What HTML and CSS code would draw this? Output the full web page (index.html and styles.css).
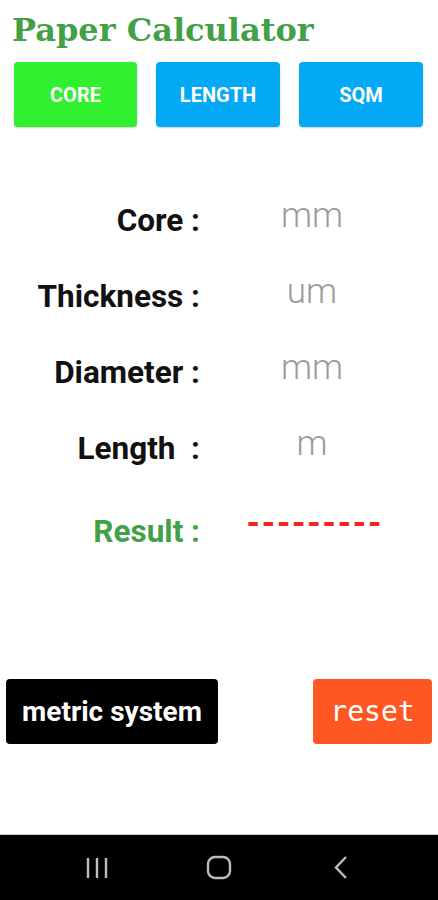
FILE: index.html
```html
<!DOCTYPE html>
<html lang="en">
<head>
    <meta charset="UTF-8">
    <meta name="viewport" content="width=device-width, initial-scale=1.0">
    <title>Paper Calculator</title>
    <link rel="stylesheet" href="styles.css">
</head>
<body>
    <div class="screen">
        <h1 class="title">Paper Calculator</h1>
        <div class="tabs">
            <button class="tab core">CORE</button>
            <button class="tab">LENGTH</button>
            <button class="tab">SQM</button>
        </div>

        <div class="form">
            <label class="label" for="core">Core :</label>
            <input class="field" id="core" placeholder="mm">

            <label class="label" for="thickness">Thickness :</label>
            <input class="field" id="thickness" placeholder="um">

            <label class="label" for="diameter">Diameter :</label>
            <input class="field" id="diameter" placeholder="mm">

            <label class="label" for="length">Length&nbsp; :</label>
            <input class="field" id="length" placeholder="m">

            <div class="label result-label">Result :</div>
            <div class="result">---------</div>
        </div>

        <div class="actions">
            <button class="metric">metric system</button>
            <button class="reset">reset</button>
        </div>
    </div>

    <div class="navbar">
        <svg width="24" height="24" viewBox="0 0 24 24">
            <path d="M3 2v20M12 2v20M21 2v20" stroke="#bdbdbd" stroke-width="2.4" fill="none"/>
        </svg>
        <svg width="26" height="25" viewBox="0 0 26 25">
            <rect x="2" y="2" width="22" height="21" rx="7" stroke="#bdbdbd" stroke-width="2.4" fill="none"/>
        </svg>
        <svg width="18" height="25" viewBox="0 0 18 25">
            <path d="M14 2L4 12.5l10 10.5" stroke="#bdbdbd" stroke-width="2.4" fill="none"/>
        </svg>
    </div>
</body>
</html>
```

FILE: styles.css
```css
body {
    margin: 0;
    background: #ffffff;
    font-family: Roboto, "Noto Sans", sans-serif;
    width: 438px;
    height: 900px;
    display: flex;
    flex-direction: column;
}
.screen {
    flex: 1;
    border-bottom: 1px solid #cfcfcf;
}
.title {
    margin: 0;
    padding: 10px 0 0 12px;
    font-family: "DejaVu Serif", "Liberation Serif", serif;
    font-weight: bold;
    font-size: 32px;
    line-height: 40px;
    color: #43a047;
}
.tabs {
    display: flex;
    gap: 19px;
    padding: 12px 0 0 14px;
}
button {
    border: none;
    cursor: pointer;
    color: #ffffff;
    border-radius: 4px;
}
.tab {
    width: 124px;
    height: 65px;
    background: #03a9f4;
    font-family: Roboto, sans-serif;
    font-weight: bold;
    font-size: 20px;
    box-shadow: 0 1px 2px rgba(0, 0, 0, 0.2);
}
.tab.core {
    background: #30f030;
    width: 123px;
}
.form {
    display: grid;
    grid-template-columns: 200px 224px;
    grid-auto-rows: 76px;
    align-items: center;
    margin-top: 53px;
}
.label {
    text-align: right;
    font-weight: bold;
    font-size: 31.5px;
    color: #111111;
    padding-top: 4px;
}
.field {
    border: none;
    outline: none;
    background: transparent;
    text-align: center;
    font-family: Roboto, sans-serif;
    font-weight: 300;
    font-size: 35px;
    width: 100%;
    padding: 0 0 6px;
}
.field::placeholder {
    color: #9a9a9a;
}
.result-label {
    color: #43a047;
    margin-top: 14px;
}
.result {
    color: #f0281c;
    font-weight: 900;
    font-size: 32px;
    letter-spacing: 0.8px;
    padding-left: 46px;
    margin-top: 2px;
}
.actions {
    display: flex;
    justify-content: space-between;
    padding: 0 6px;
    margin-top: 119px;
}
.metric {
    width: 212px;
    height: 65px;
    background: #000000;
    font-family: Roboto, sans-serif;
    font-weight: bold;
    font-size: 28px;
}
.reset {
    width: 119px;
    height: 65px;
    background: #ff5722;
    font-family: "DejaVu Sans Mono", "Liberation Mono", monospace;
    font-size: 28px;
}
.navbar {
    height: 65px;
    background: #000000;
    display: grid;
    grid-template-columns: repeat(3, 122px);
    justify-content: center;
    justify-items: center;
    align-items: center;
}
```
